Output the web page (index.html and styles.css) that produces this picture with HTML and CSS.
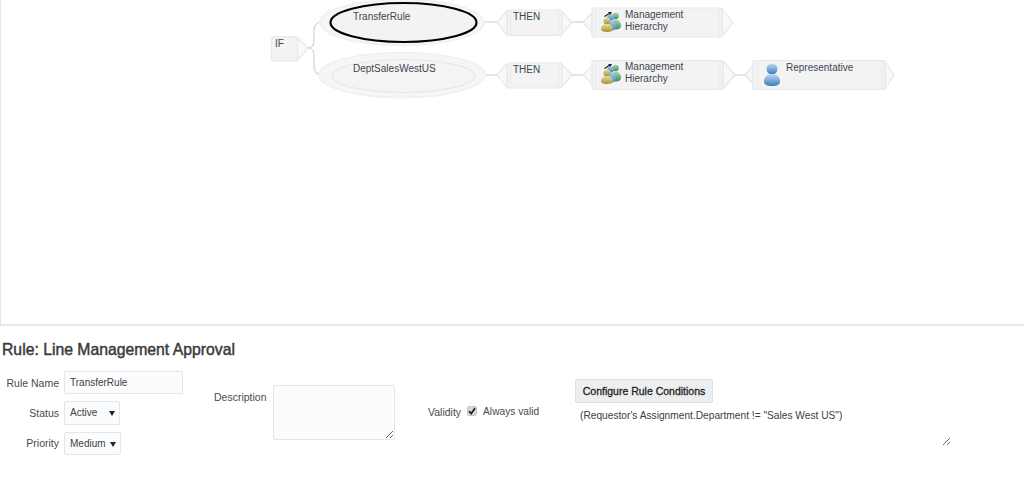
FILE: index.html
```html
<!DOCTYPE html>
<html lang="en">
<head>
<meta charset="utf-8">
<title>Rule: Line Management Approval</title>
<link rel="stylesheet" href="styles.css">
</head>
<body>
<section class="canvas">
  <svg class="wires" width="1024" height="325" viewBox="0 0 1024 325">
    <defs>
      <linearGradient id="blue" x1="0" y1="0" x2="0" y2="1"><stop offset="0" stop-color="#c2daf0"/><stop offset="1" stop-color="#3a7cc0"/></linearGradient>
      <linearGradient id="olive" x1="0" y1="0" x2="0" y2="1"><stop offset="0" stop-color="#e8df9c"/><stop offset="1" stop-color="#a3932f"/></linearGradient>
      <linearGradient id="green" x1="0" y1="0" x2="0" y2="1"><stop offset="0" stop-color="#a9d5ae"/><stop offset="1" stop-color="#3f8f58"/></linearGradient>
      <linearGradient id="midblue" x1="0" y1="0" x2="0" y2="1"><stop offset="0" stop-color="#a9cdee"/><stop offset="1" stop-color="#2f86d2"/></linearGradient>
      <g id="group">
        <circle cx="14.500" cy="5" r="3.300" fill="url(#green)"/>
        <path d="M10 15c0-4 2-6.500 4.800-6.500S20 11 20 15c0 2-2 3.500-5 3.500S10 17 10 15z" fill="url(#green)"/>
        <circle cx="9.500" cy="6.500" r="3.300" fill="url(#midblue)"/>
        <path d="M5 16c0-4 2-6 4.700-6s5.300 2 5.300 6c0 2-2 3.500-5 3.500S5 18 5 16z" fill="url(#midblue)"/>
        <circle cx="6" cy="10" r="3.500" fill="url(#olive)"/>
        <path d="M0 18.500c0-3.500 2-5.500 6-5.500s6 2 6 5.500c0 1.500-2 2.500-6 2.500s-6-1-6-2.500z" fill="url(#olive)"/>
        <path d="M3.500 5.500L9 2M7.500 1.500L10 1.500 9 3.500" stroke="#222" stroke-width="1.200" fill="none"/>
      </g>
    </defs>

    <g class="wire">
      <path d="M308 48c4 0 6-3 6-8V31c0-6 3-9 8-9"/>
      <path d="M308 48c4 0 6 3 6 8V66c0 6 3 9 8 9"/>
      <path d="M484 22H497"/><path d="M485 75H497"/>
      <path d="M572 22H583"/><path d="M572 75H583"/>
      <path d="M735 75H745"/>
    </g>

    <path class="chev" d="M297 37L308 48 297 61z"/>
    <rect class="node" x="271.500" y="36.500" width="26" height="24.500" rx="3"/>

    <ellipse class="halo" cx="402" cy="22.500" rx="82" ry="23"/>
    <ellipse class="focus" cx="403.500" cy="22.500" rx="73" ry="19.500"/>

    <ellipse class="halo" cx="402" cy="75" rx="83" ry="22.500"/>
    <ellipse class="inner" cx="403.500" cy="76" rx="71.500" ry="16.500"/>

    <path class="chev" d="M507 10.500L497 22.500 507 35zM561 10.500L572 22.500 561 35z"/>
    <rect class="node" x="507" y="10" width="55" height="25.500" rx="2"/>
    <path class="edge" d="M510.500 10V35.500M558.500 10V35.500"/>
    <path class="chev" d="M507 63.500L497 75 507 87.500zM561 63.500L572 75 561 87.500z"/>
    <rect class="node" x="507" y="63" width="55" height="25" rx="2"/>
    <path class="edge" d="M510.500 63V88M558.500 63V88"/>

    <path class="chev" d="M592 13L583 22.500 592 32zM722 8.500L733 22.500 722 36.500z"/>
    <rect class="node" x="592" y="8" width="130" height="29" rx="1"/>
    <path class="edge" d="M595.500 8V37M719 8V37"/>
    <path class="chev" d="M592 66L583 75 592 84zM723 61L735 75 723 89z"/>
    <rect class="node" x="592" y="60.500" width="131" height="29" rx="1"/>
    <path class="edge" d="M595.500 60.500V89.500M720 60.500V89.500"/>

    <path class="chev" d="M753 66L745 75 753 84zM885 61L894 75 885 89z"/>
    <rect class="node" x="753" y="60.500" width="132" height="29" rx="1"/>
    <path class="edge" d="M757.500 60.500V89.500M882 60.500V89.500"/>

    <use href="#group" x="601" y="11"/>
    <use href="#group" x="601" y="63"/>

    <circle cx="772" cy="69" r="5.500" fill="url(#blue)"/>
    <path d="M764 82c0-5.500 3-8 8-8s8 2.500 8 8c0 2.500-3 4-8 4s-8-1.500-8-4z" fill="url(#blue)"/>
  </svg>

  <span class="label l-if">IF</span>
  <span class="label l-transfer">TransferRule</span>
  <span class="label l-dept">DeptSalesWestUS</span>
  <span class="label l-then1">THEN</span>
  <span class="label l-then2">THEN</span>
  <span class="label l-mh1">Management<br>Hierarchy</span>
  <span class="label l-mh2">Management<br>Hierarchy</span>
  <span class="label l-rep">Representative</span>
</section>

<h1 class="title">Rule: Line Management Approval</h1>

<form class="form">
  <div class="col-main">
    <div class="row"><label class="lbl">Rule Name</label><input class="field name" type="text" value="TransferRule"></div>
    <div class="row"><label class="lbl">Status</label>
      <span class="select status"><select><option>Active</option></select></span></div>
    <div class="row"><label class="lbl">Priority</label>
      <span class="select priority"><select><option>Medium</option></select></span></div>
  </div>
  <div class="col-desc">
    <label class="lbl desc-lbl">Description</label>
    <textarea class="field desc"></textarea>
  </div>
  <div class="col-valid">
    <span class="lbl valid-lbl">Validity</span>
    <span class="check"><svg width="10" height="10" viewBox="0 0 10 10"><path d="M2 5.200l2.200 2.300L8 2.300" fill="none" stroke="#222" stroke-width="1.800"/></svg></span>
    <span class="always">Always valid</span>
  </div>
  <div class="col-cond">
    <button class="btn" type="button">Configure Rule Conditions</button>
    <textarea class="cond">(Requestor's Assignment.Department != "Sales West US")</textarea>
  </div>
</form>
</body>
</html>
```

FILE: styles.css
```css
* { box-sizing: border-box; }

html, body {
  margin: 0;
  height: 498px;
  overflow: hidden;
  background: #fff;
  font-family: "Liberation Sans", Arial, sans-serif;
  font-size: 11px;
  color: #404040;
}

.canvas {
  position: relative;
  height: 326px;
  border-left: 1px solid #e6e6e6;
  border-bottom: 2px solid #e9e9e9;
  overflow: hidden;
}

.wires { position: absolute; left: -1px; top: 0; }

.wire path { fill: none; stroke: #c4d6e8; stroke-width: 1.200; }
.node { fill: #f3f3f3; stroke: #e6e9ed; stroke-width: 1.200; }
.chev { fill: #f8f8f8; stroke: #e5e8ea; stroke-width: 1.200; stroke-linejoin: round; }
.edge { fill: none; stroke: #e8ecf1; stroke-width: 1.200; }
.halo { fill: #f6f6f6; stroke: #f0f0f0; stroke-width: 1.500; }
.inner { fill: #f4f4f4; stroke: #e8e8e8; stroke-width: 1.200; }
.focus { fill: #f3f3f3; stroke: #000; stroke-width: 2.200; }

.label {
  position: absolute;
  font-size: 10px;
  line-height: 12px;
  color: #3c4650;
  white-space: nowrap;
}
.l-if { left: 274px; top: 38px; }
.l-transfer { left: 352px; top: 11px; }
.l-dept { left: 352px; top: 63px; }
.l-then1 { left: 512px; top: 11px; }
.l-then2 { left: 512px; top: 64px; }
.l-mh1 { left: 624px; top: 9px; }
.l-mh2 { left: 624px; top: 61px; }
.l-rep { left: 785px; top: 62px; }

.title {
  margin: 15px 0 0 2px;
  font-size: 15.750px;
  line-height: 18px;
  font-weight: normal;
  -webkit-text-stroke: 0.45px #3a3a3a;
  color: #3a3a3a;
}

.form {
  display: flex;
  align-items: flex-start;
  margin-top: 12px;
  height: 90px;
}

.lbl { color: #4a4a4a; font-size: 10.500px; }

.col-main {
  width: 214px;
  flex: none;
  display: flex;
  flex-direction: column;
  gap: 7px;
}
.row { display: flex; align-items: center; gap: 5px; }
.row .lbl { width: 59px; text-align: right; }

.field {
  border: 1px solid #e6e6e6;
  border-radius: 2px;
  background: #fbfcfe;
  font: 10px "Liberation Sans", Arial, sans-serif;
  color: #404040;
  outline: none;
}
.name { width: 119px; height: 23px; padding: 0 5px; }

.select { position: relative; display: block; height: 23.500px; }
.select select {
  appearance: none;
  width: 100%;
  height: 100%;
  border: 1px solid #e6e6e6;
  border-radius: 2px;
  background: #fbfcfe;
  padding: 0 0 0 5px;
  font: 10px "Liberation Sans", Arial, sans-serif;
  color: #404040;
}
.select::after {
  content: "";
  position: absolute;
  right: 5px;
  top: 10px;
  border-left: 3px solid transparent;
  border-right: 3px solid transparent;
  border-top: 5px solid #222;
  pointer-events: none;
}
.status { width: 56px; }
.priority { width: 57px; }

.col-desc {
  flex: none;
  display: flex;
  align-items: flex-start;
  gap: 5px;
  width: 214px;
  margin-top: 14px;
}
.desc-lbl { margin-top: 6px; }
.desc { width: 122px; height: 55px; resize: both; padding: 3px; display: block; margin-left: 1px; }

.col-valid {
  flex: none;
  width: 147px;
  display: flex;
  align-items: center;
  margin-top: 33px;
}
.valid-lbl { margin-right: 5px; margin-top: 2px; }
.check {
  width: 10px;
  height: 10px;
  border-radius: 2px;
  background: #d8d8d8;
  border: 1px solid #c6c6c6;
  display: flex;
  align-items: center;
  justify-content: center;
  margin-right: 6px;
  margin-left: 1px;
}
.check svg { flex: none; }
.always { font-size: 10.200px; color: #4a4a4a; }

.col-cond {
  flex: none;
  width: 378px;
  margin-top: 8px;
  display: flex;
  flex-direction: column;
  align-items: flex-start;
}
.btn {
  height: 24px;
  width: 138px;
  padding: 0;
  border: 1px solid #dde1e5;
  border-radius: 2px;
  background: #eceef0;
  font: 10.500px "Liberation Sans", Arial, sans-serif;
  -webkit-text-stroke: 0.3px #222;
  color: #222;
}
.cond {
  width: 376px;
  height: 41px;
  margin-top: 2px;
  padding: 5px 5px;
  border: 0;
  outline: none;
  background: #fff;
  resize: both;
  font: 10.200px "Liberation Sans", Arial, sans-serif;
  color: #404040;
  display: block;
  overflow: hidden;
}
```
